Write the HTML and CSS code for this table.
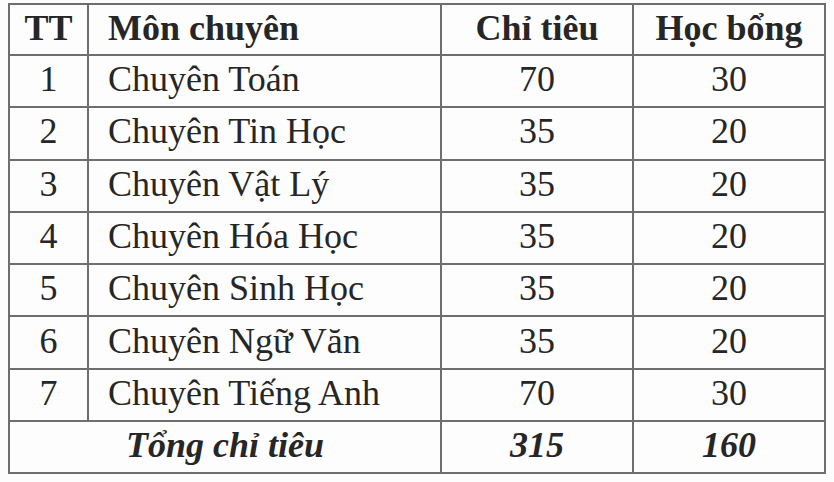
FILE: index.html
```html
<!DOCTYPE html>
<html lang="vi">
<head>
<meta charset="utf-8">
<link rel="stylesheet" href="styles.css">
</head>
<body>
<table class="quota">
  <colgroup>
    <col class="c-tt"><col class="c-name"><col class="c-num"><col class="c-num">
  </colgroup>
  <thead>
    <tr><th>TT</th><th class="name">Môn chuyên</th><th>Chỉ tiêu</th><th>Học bổng</th></tr>
  </thead>
  <tbody>
    <tr><td>1</td><td class="name">Chuyên Toán</td><td>70</td><td>30</td></tr>
    <tr><td>2</td><td class="name">Chuyên Tin Học</td><td>35</td><td>20</td></tr>
    <tr><td>3</td><td class="name">Chuyên Vật Lý</td><td>35</td><td>20</td></tr>
    <tr><td>4</td><td class="name">Chuyên Hóa Học</td><td>35</td><td>20</td></tr>
    <tr><td>5</td><td class="name">Chuyên Sinh Học</td><td>35</td><td>20</td></tr>
    <tr><td>6</td><td class="name">Chuyên Ngữ Văn</td><td>35</td><td>20</td></tr>
    <tr><td>7</td><td class="name">Chuyên Tiếng Anh</td><td>70</td><td>30</td></tr>
    <tr class="total"><td colspan="2">Tổng chỉ tiêu</td><td>315</td><td>160</td></tr>
  </tbody>
</table>
</body>
</html>
```
FILE: styles.css
```css
html, body {
  margin: 0;
  padding: 0;
  background: #fdfdfd;
}
body {
  padding: 3px 0 0 8px;
  font-family: "Liberation Serif", "Times New Roman", serif;
  color: #262626;
}
.quota {
  border-collapse: collapse;
  table-layout: fixed;
  width: 816px;
  font-size: 36px;
}
.c-tt { width: 79px; }
.c-name { width: 353px; }
.c-num { width: 192px; }
.quota th, .quota td {
  border: 2px solid #6e6e6e;
  height: 46.3px;
  padding: 0 0 4px;
  text-align: center;
  vertical-align: middle;
  line-height: 1;
}
.quota th { font-weight: bold; height: 46px; padding-bottom: 3px; }
.quota .name { text-align: left; padding-left: 19px; }
.quota .total td { font-weight: bold; font-style: italic; }
```
